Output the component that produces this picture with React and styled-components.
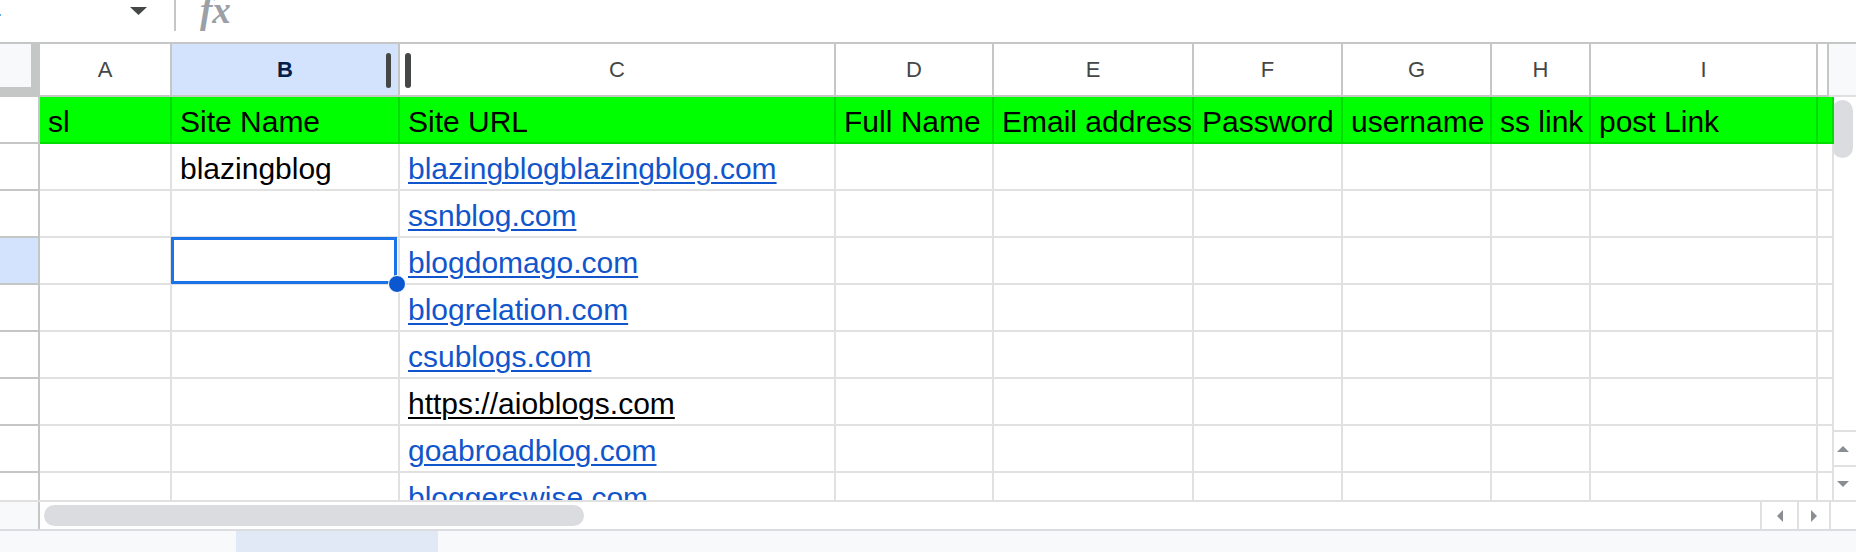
import React from "react";
import styled, { createGlobalStyle, css } from "styled-components";

const GlobalStyle = createGlobalStyle`
  html, body {
    margin: 0;
    padding: 0;
    background: #fff;
    overflow: hidden;
  }
  body {
    font-family: "Liberation Sans", Arial, sans-serif;
  }
`;

const columns = [
  { key: "A", width: 132 },
  { key: "B", width: 228, active: true },
  { key: "C", width: 436 },
  { key: "D", width: 158 },
  { key: "E", width: 200 },
  { key: "F", width: 149 },
  { key: "G", width: 149 },
  { key: "H", width: 99 },
  { key: "I", width: 227 },
  { key: "", width: 11 },
];

const headings = ["sl", "Site Name", "Site URL", "Full Name", "Email address", "Password", "username", "ss link", "post Link", ""];

const sites = [
  { name: "blazingblog", url: "blazingblogblazingblog.com" },
  { url: "ssnblog.com" },
  { url: "blogdomago.com", selected: true },
  { url: "blogrelation.com" },
  { url: "csublogs.com" },
  { url: "https://aioblogs.com", plain: true },
  { url: "goabroadblog.com" },
  { url: "bloggerswise.com" },
];

const Page = styled.div`
  width: 1856px;
  height: 552px;
  display: flex;
  flex-direction: column;
  overflow: hidden;
`;

const Toolbar = styled.div`
  height: 44px;
  flex: none;
  box-sizing: border-box;
  border-bottom: 2px solid #c4c7c5;
  display: flex;
  align-items: flex-start;
  overflow: hidden;
`;

const NameBox = styled.div`
  width: 174px;
  height: 42px;
  box-sizing: border-box;
  padding-right: 27px;
  display: flex;
  justify-content: space-between;
  align-items: flex-start;
`;

const NameText = styled.span`
  font-size: 18px;
  line-height: 18px;
  margin-left: -3px;
  margin-top: 1px;
  color: #1f1f1f;
`;

const Caret = styled.svg`
  margin-top: 7px;
`;

const Divider = styled.div`
  width: 2px;
  height: 31px;
  background: #c4c7c5;
`;

const Fx = styled.span`
  margin-left: 24px;
  margin-top: -7px;
  font-family: "Liberation Serif", "Times New Roman", serif;
  font-style: italic;
  font-weight: bold;
  font-size: 37px;
  line-height: 36px;
  color: #9aa0a6;
`;

const SheetArea = styled.div`
  height: 456px;
  flex: none;
  display: flex;
  overflow: hidden;
`;

const Grid = styled.div`
  flex: none;
  display: grid;
  grid-template-columns: 40px ${columns.map((c) => `${c.width}px`).join(" ")};
  grid-template-rows: 53px;
  grid-auto-rows: 47px;
  align-content: start;
`;

const Corner = styled.div`
  box-sizing: border-box;
  background: #f8f9fa;
  border-right: 9px solid #c4c7c5;
  border-bottom: 10px solid #c4c7c5;
`;

const ColHead = styled.div`
  position: relative;
  box-sizing: border-box;
  display: flex;
  align-items: center;
  justify-content: center;
  border-right: 2px solid #c4c7c5;
  border-bottom: 2px solid #c4c7c5;
  background: ${(p) => (p.$active ? "#d3e3fd" : "#fff")};
  color: ${(p) => (p.$active ? "#041e49" : "#444746")};
  font-family: "Liberation Sans", Arial, sans-serif;
  font-weight: ${(p) => (p.$active ? 700 : 400)};
  font-size: 22px;
`;

const Grip = styled.span`
  position: absolute;
  top: 9px;
  width: ${(p) => p.$w}px;
  height: 35px;
  border-radius: 3px;
  background: #444746;
  ${(p) => (p.$side === "right" ? "right: 7px;" : "left: 5px;")}
`;

const RowHead = styled.div`
  box-sizing: border-box;
  border-right: 2px solid #c4c7c5;
  border-bottom: 2px solid #c4c7c5;
  background: ${(p) => (p.$active ? "#d3e3fd" : "#fff")};
`;

const Cell = styled.div`
  position: relative;
  box-sizing: border-box;
  min-width: 0;
  display: flex;
  align-items: flex-end;
  padding: 0 6px 3px 8px;
  border-right: 2px solid ${(p) => (p.$green ? "#00dc00" : "#e1e1e1")};
  border-bottom: 2px solid ${(p) => (p.$green ? "#00dc00" : "#e1e1e1")};
  background: ${(p) => (p.$green ? "#00ff00" : "#fff")};
  color: #000;
  font-size: 30px;
  line-height: 34px;
  white-space: nowrap;

  ${(p) =>
    p.$selected &&
    css`
      z-index: 1;
      &::after {
        content: "";
        position: absolute;
        top: -1px;
        left: -1px;
        right: 1px;
        bottom: -1px;
        border: 3px solid #1a73e8;
        pointer-events: none;
      }
    `}
`;

const FillHandle = styled.span`
  position: absolute;
  right: -8px;
  bottom: -10px;
  width: 16px;
  height: 16px;
  border: 1px solid #fff;
  border-radius: 50%;
  background: #0b57d0;
  z-index: 2;
`;

const Link = styled.span`
  color: ${(p) => (p.$plain ? "#000" : "#1155cc")};
  text-decoration: underline;
  text-decoration-thickness: 2px;
  text-underline-offset: 3px;
`;

const VScroll = styled.div`
  width: 27px;
  flex: none;
  display: flex;
  flex-direction: column;
`;

const VCap = styled.div`
  height: 53px;
  flex: none;
  box-sizing: border-box;
  background: #f8f9fa;
  border-bottom: 2px solid #e0e0e0;
`;

const VTrack = styled.div`
  flex: 1;
  padding: 3px 3px 0;
`;

const VThumb = styled.div`
  height: 58px;
  border-radius: 11px;
  background: #dadce0;
`;

const ArrowBox = styled.div`
  flex: none;
  box-sizing: border-box;
  display: flex;
  align-items: center;
  justify-content: center;
  background: #fff;
  ${(p) =>
    p.$vertical
      ? css`
          height: 35px;
          border-top: 2px solid #e0e0e0;
        `
      : css`
          width: ${p.$w}px;
          border-left: 2px solid #e0e0e0;
        `}
`;

const arrowShapes = {
  up: "border-left: 6px solid transparent; border-right: 6px solid transparent; border-bottom: 6px solid #8a8d91;",
  down: "border-left: 6px solid transparent; border-right: 6px solid transparent; border-top: 6px solid #8a8d91;",
  left: "border-top: 6px solid transparent; border-bottom: 6px solid transparent; border-right: 6px solid #8a8d91;",
  right: "border-top: 6px solid transparent; border-bottom: 6px solid transparent; border-left: 6px solid #8a8d91;",
};

const Arrow = styled.span`
  width: 0;
  height: 0;
  ${(p) => arrowShapes[p.$dir]}
`;

const HBar = styled.div`
  height: 29px;
  flex: none;
  box-sizing: border-box;
  border-top: 2px solid #e0e0e0;
  display: flex;
`;

const HCap = styled.div`
  width: 40px;
  flex: none;
  box-sizing: border-box;
  background: #f8f9fa;
  border-right: 2px solid #c4c7c5;
`;

const HTrack = styled.div`
  flex: 1;
  padding: 3px 0 0 4px;
`;

const HThumb = styled.div`
  width: 540px;
  height: 21px;
  border-radius: 11px;
  background: #dadce0;
`;

const HCorner = styled.div`
  width: 27px;
  flex: none;
  box-sizing: border-box;
  border-left: 2px solid #e0e0e0;
`;

const BottomBar = styled.div`
  flex: 1;
  display: flex;
  background: #f8f9fa;
  border-top: 2px solid #dadce0;
`;

const SheetTab = styled.div`
  margin-left: 236px;
  width: 202px;
  background: #e1e9f7;
`;

export default function App() {
  return (
    <Page>
      <GlobalStyle />
      <Toolbar>
        <NameBox>
          <NameText>.</NameText>
          <Caret width="17" height="8" viewBox="0 0 17 8">
            <path d="M0 0h17L8.5 8z" fill="#444746" />
          </Caret>
        </NameBox>
        <Divider />
        <Fx>fx</Fx>
      </Toolbar>

      <SheetArea>
        <Grid>
          <Corner />
          {columns.map((c, i) => (
            <ColHead key={i} $active={c.active}>
              {c.key}
              {c.key === "B" && <Grip $side="right" $w={5} />}
              {c.key === "C" && <Grip $side="left" $w={6} />}
            </ColHead>
          ))}

          <RowHead />
          {headings.map((h, i) => (
            <Cell key={i} $green>
              {h}
            </Cell>
          ))}

          {sites.map((s, r) => (
            <React.Fragment key={r}>
              <RowHead $active={s.selected} />
              <Cell />
              <Cell $selected={s.selected}>
                {s.name}
                {s.selected && <FillHandle />}
              </Cell>
              <Cell>
                <Link $plain={s.plain}>{s.url}</Link>
              </Cell>
              {columns.slice(3).map((c, i) => (
                <Cell key={i} />
              ))}
            </React.Fragment>
          ))}
        </Grid>

        <VScroll>
          <VCap />
          <VTrack>
            <VThumb />
          </VTrack>
          <ArrowBox $vertical>
            <Arrow $dir="up" />
          </ArrowBox>
          <ArrowBox $vertical>
            <Arrow $dir="down" />
          </ArrowBox>
        </VScroll>
      </SheetArea>

      <HBar>
        <HCap />
        <HTrack>
          <HThumb />
        </HTrack>
        <ArrowBox $w={37}>
          <Arrow $dir="left" />
        </ArrowBox>
        <ArrowBox $w={32}>
          <Arrow $dir="right" />
        </ArrowBox>
        <HCorner />
      </HBar>

      <BottomBar>
        <SheetTab />
      </BottomBar>
    </Page>
  );
}
